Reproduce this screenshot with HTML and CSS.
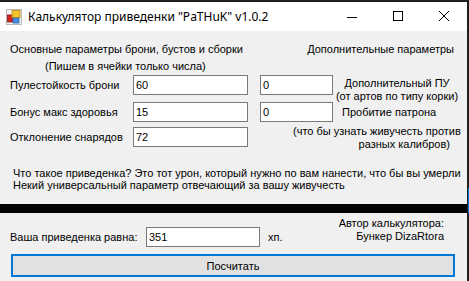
FILE: index.html
```html
<!DOCTYPE html>
<html lang="ru">
<head>
    <meta charset="UTF-8">
    <title>Калькулятор приведенки "PaTHuK" v1.0.2</title>
    <link rel="stylesheet" href="styles.css">
</head>
<body>
    <div class="screen">
        <div class="window">
            <!-- Title bar -->
            <div class="titlebar">
                <svg class="app-icon" width="16" height="16" viewBox="0 0 16 16">
                    <rect x="0.5" y="0.5" width="15" height="15" fill="#f4f4f4" stroke="#b8b8b8"/>
                    <rect x="1.5" y="6" width="5" height="7" fill="#d8261c" stroke="#8c1a12" stroke-width="0.8"/>
                    <rect x="6" y="1.5" width="8" height="7" fill="#f5c22b" stroke="#c08a10" stroke-width="0.8"/>
                    <rect x="7" y="9" width="6" height="5" fill="#4c8fe0" stroke="#2a62b0" stroke-width="0.8"/>
                </svg>
                <span class="title">Калькулятор приведенки "PaTHuK" v1.0.2</span>
                <div class="controls">
                    <svg class="ctrl" width="46" height="29" viewBox="0 0 46 29">
                        <line x1="18" y1="15.5" x2="28" y2="15.5" stroke="#000" stroke-width="1"/>
                    </svg>
                    <svg class="ctrl" width="46" height="29" viewBox="0 0 46 29">
                        <rect x="18.5" y="9.5" width="9" height="9" fill="none" stroke="#000" stroke-width="1"/>
                    </svg>
                    <svg class="ctrl" width="46" height="29" viewBox="0 0 46 29">
                        <path d="M18 9 L28 19 M28 9 L18 19" stroke="#000" stroke-width="1"/>
                    </svg>
                </div>
            </div>

            <!-- Main parameters -->
            <div class="form">
                <div class="heads">
                    <span>Основные параметры брони, бустов и сборки</span>
                    <span>Дополнительные параметры</span>
                </div>
                <div class="hint">(Пишем в ячейки только числа)</div>

                <div class="row row-first">
                    <span class="label">Пулестойкость брони</span>
                    <input class="field field-main" type="text" value="60">
                    <input class="field field-extra" type="text" value="0">
                    <span class="note note-center">Дополнительный ПУ<br>(от артов по типу корки)</span>
                </div>
                <div class="row row-second">
                    <span class="label">Бонус макс здоровья</span>
                    <input class="field field-main" type="text" value="15">
                    <input class="field field-extra" type="text" value="0">
                    <span class="note">Пробитие патрона</span>
                </div>
                <div class="row row-third">
                    <span class="label">Отклонение снарядов</span>
                    <input class="field field-main" type="text" value="72">
                    <span class="note note-wide">
                        <span>(что бы узнать живучесть против</span>
                        <span class="note-end">разных калибров)</span>
                    </span>
                </div>

                <div class="about">
                    <p>Что такое приведенка? Это тот урон, который нужно по вам нанести, что бы вы умерли</p>
                    <p>Некий универсальный параметр отвечающий за вашу живучесть</p>
                </div>
            </div>

            <div class="divider"></div>

            <!-- Result -->
            <div class="result">
                <div class="result-row">
                    <div class="result-line">
                        <span class="label">Ваша приведенка равна:</span>
                        <input class="field field-result" type="text" value="351">
                        <span class="unit">хп.</span>
                    </div>
                    <span class="author">Автор калькулятора:<br>Бункер DizaRtora</span>
                </div>
                <button class="calc">Посчитать</button>
            </div>
        </div>
        <div class="edge"><span class="edge-accent"></span></div>
    </div>
</body>
</html>
```

FILE: styles.css
```css
/* General */
body {
    margin: 0;
    padding: 0;
    background: #1f1f1f;
    font-family: 'Liberation Sans', Arial, sans-serif;
    font-size: 11px;
    color: #000;
}

.screen {
    display: flex;
    width: 469px;
    height: 281px;
    overflow: hidden;
}

.window {
    width: 467px;
    margin-top: 2px;
    background: #f0f0f0;
    display: flex;
    flex-direction: column;
}

.window > * {
    flex-shrink: 0;
}

/* Title bar */
.titlebar {
    height: 29px;
    background: #fff;
    display: flex;
    align-items: center;
}

.app-icon {
    margin: 0 6px 0 6px;
}

.title {
    font-family: 'Noto Sans', sans-serif;
    font-size: 12px;
    flex: 1;
}

.controls {
    display: flex;
}

.ctrl {
    display: block;
}

/* Form */
.form {
    box-sizing: border-box;
    padding: 12px 0 0 10px;
    height: 173px;
}

.heads {
    display: flex;
    justify-content: space-between;
    padding-right: 13px;
    line-height: 13px;
}

.hint {
    margin: 4px 0 0 35px;
    line-height: 13px;
}

.row {
    display: flex;
    align-items: center;
    height: 20px;
}

.row-first { margin-top: 2px; }
.row-second { margin-top: 7px; }
.row-third { margin-top: 5px; }

.label {
    width: 123px;
}

.field {
    box-sizing: border-box;
    height: 20px;
    border: 1px solid #7a7a7a;
    background: #fff;
    font-family: 'Liberation Sans', Arial, sans-serif;
    font-size: 11px;
    padding: 0 2px;
    margin: 0;
    outline: none;
}

.field-main {
    width: 115px;
}

.field-extra {
    width: 73px;
    margin-left: 12px;
}

.note {
    margin-left: 9px;
    line-height: 13px;
    white-space: nowrap;
}

.note-center {
    width: 128px;
    text-align: center;
    margin-left: 0;
    padding-top: 9px;
}

.note-wide {
    display: flex;
    flex-direction: column;
    width: 157px;
    margin: -2px 0 0 45px;
    align-self: flex-start;
}

.note-end {
    text-align: right;
}

.about {
    margin: 20px 0 0 3px;
}

.about p {
    margin: 0;
    line-height: 12px;
}

.divider {
    height: 9px;
    background: #000;
}

/* Result */
.result {
    padding: 4px 0 0 10px;
}

.result-row {
    display: flex;
    align-items: flex-start;
    height: 30px;
}

.result-line {
    display: flex;
    align-items: center;
    margin-top: 10px;
}

.result-line .label {
    width: 136px;
}

.field-result {
    width: 114px;
}

.unit {
    margin-left: 8px;
}

.author {
    margin-left: auto;
    margin-right: 23px;
    text-align: right;
    line-height: 13px;
}

.calc {
    display: block;
    width: 444px;
    height: 23px;
    margin: 7px 0 0 1px;
    background: #e1e1e1;
    border: 2px solid #0078d7;
    font-family: 'Liberation Sans', Arial, sans-serif;
    font-size: 11px;
    padding: 0;
}

/* Screen edge */
.edge {
    width: 2px;
    display: flex;
    flex-direction: column;
    align-items: flex-end;
}

.edge-accent {
    display: block;
    width: 1px;
    height: 25px;
    margin-top: 188px;
    background: #0078d7;
}
```
